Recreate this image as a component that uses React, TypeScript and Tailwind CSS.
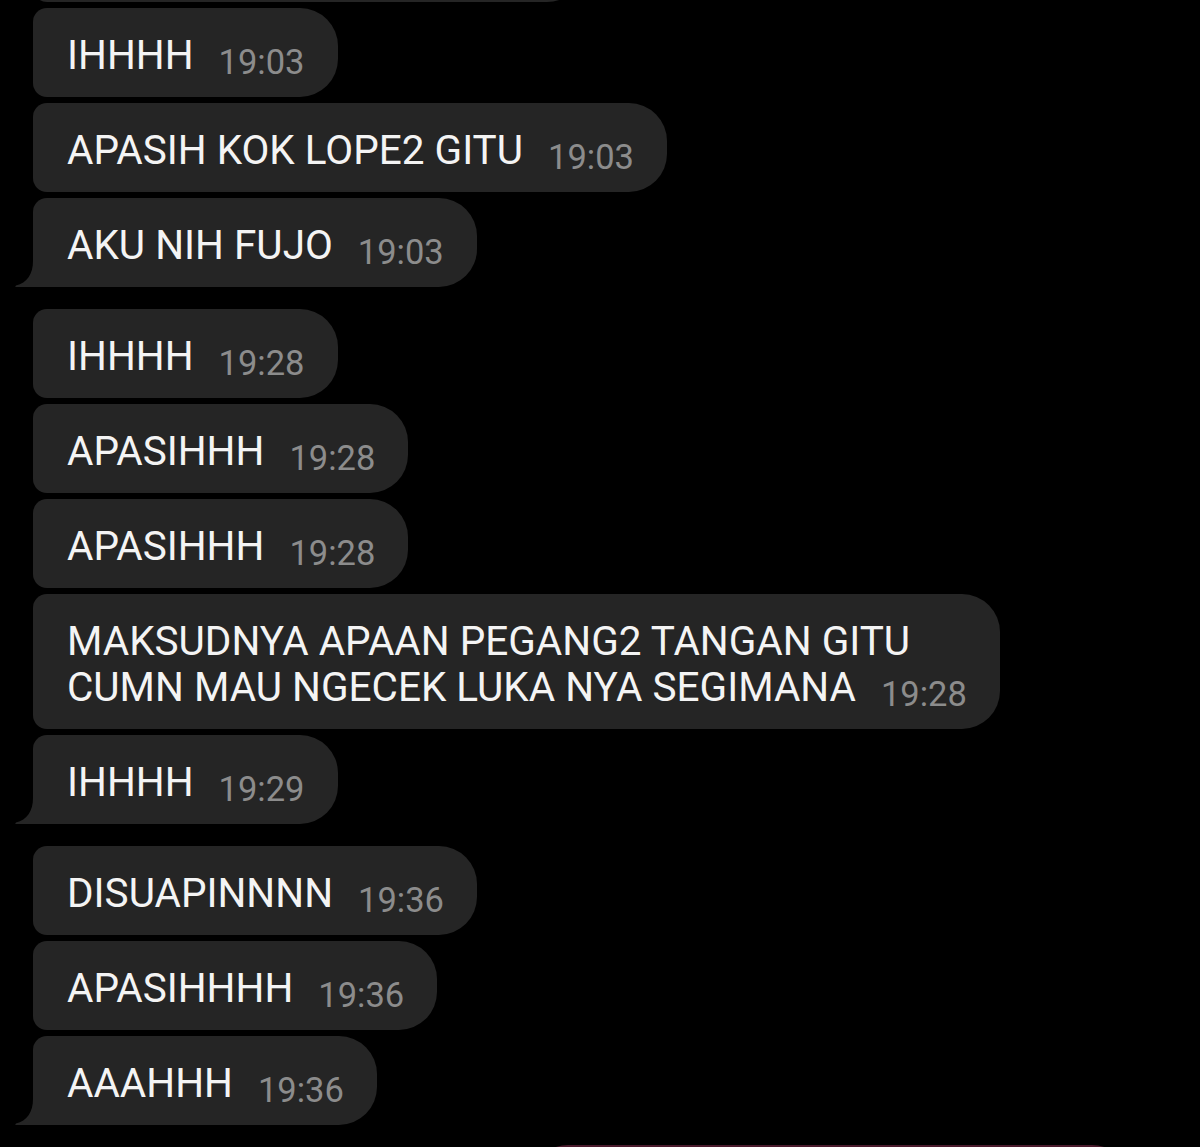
type Msg = { text: string[]; time: string }

const groups: Msg[][] = [
  [
    { text: ["IHHHH"], time: "19:03" },
    { text: ["APASIH KOK LOPE2 GITU"], time: "19:03" },
    { text: ["AKU NIH FUJO"], time: "19:03" },
  ],
  [
    { text: ["IHHHH"], time: "19:28" },
    { text: ["APASIHHH"], time: "19:28" },
    { text: ["APASIHHH"], time: "19:28" },
    { text: ["MAKSUDNYA APAAN PEGANG2 TANGAN GITU", "CUMN MAU NGECEK LUKA NYA SEGIMANA"], time: "19:28" },
    { text: ["IHHHH"], time: "19:29" },
  ],
  [
    { text: ["DISUAPINNNN"], time: "19:36" },
    { text: ["APASIHHHH"], time: "19:36" },
    { text: ["AAAHHH"], time: "19:36" },
  ],
]

function Tail() {
  return (
    <svg
      className="absolute -left-[18px] bottom-0 h-[26px] w-[19px]"
      viewBox="0 0 19 26"
    >
      <path d="M19 0 L18 0 C18 13 12 22 1 24.5 Q0 25 0.5 26 L19 26 Z" fill="#252525" />
    </svg>
  )
}

function Bubble({ msg, last }: { msg: Msg; last: boolean }) {
  return (
    <div className="flex">
      <div
        className={`relative bg-[#252525] pl-[34px] pr-[33px] pt-[24px] pb-[19px] rounded-tl-[14px] rounded-r-[38px] ${
          last ? "rounded-bl-none" : "rounded-bl-[14px]"
        }`}
      >
        <p className="text-[40.5px] leading-[46px] text-[#f4f4f4] whitespace-nowrap">
          {msg.text.map((line, i) => (
            <span key={i}>
              {line}
              {i < msg.text.length - 1 && <br />}
            </span>
          ))}
          <span className="ml-[25px] inline-block align-[-5px] text-[34.5px] leading-[30px] text-[#8c8c8c]">
            {msg.time}
          </span>
        </p>
        {last && <Tail />}
      </div>
    </div>
  )
}

export default function App() {
  return (
    <div
      className="h-[1147px] w-full overflow-hidden bg-black px-[33px]"
      style={{ fontFamily: "Roboto, 'Noto Sans', sans-serif" }}
    >
      <div className="flex flex-col gap-[22px]">
        <div className="flex flex-col gap-[6px]">
          {/* cut-off bubble above the view */}
          <div className="-mt-[87px] h-[89px] w-[552px] rounded-l-[14px] rounded-r-[38px] bg-[#252525]" />
          {groups[0].map((m, i) => (
            <Bubble key={i} msg={m} last={i === groups[0].length - 1} />
          ))}
        </div>
        {groups.slice(1).map((g, gi) => (
          <div key={gi} className="flex flex-col gap-[6px]">
            {g.map((m, i) => (
              <Bubble key={i} msg={m} last={i === g.length - 1} />
            ))}
          </div>
        ))}
        {/* outgoing bubble, only its top edge shows */}
        <div className="-mt-[2px] flex justify-end pr-[37px]">
          <div className="h-[89px] w-[600px] rounded-[38px] bg-[#4a1a2c]" />
        </div>
      </div>
    </div>
  )
}
